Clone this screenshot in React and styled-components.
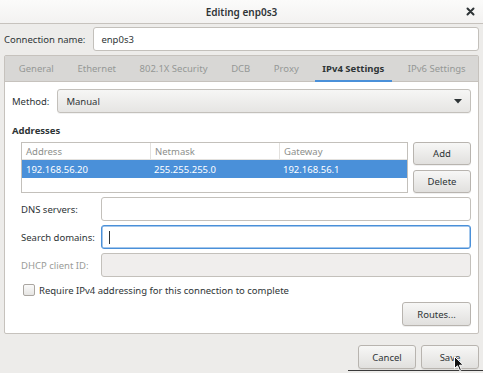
import React from "react"
import styled, { createGlobalStyle, css } from "styled-components"

const GlobalStyle = createGlobalStyle`
  html, body {
    margin: 0;
    padding: 0;
    background: #e8e7e6;
  }
  * {
    box-sizing: border-box;
  }
`

const Window = styled.div`
  position: relative;
  width: 483px;
  height: 373px;
  overflow: hidden;
  background: #edecea;
  font-family: "Noto Sans", "Open Sans", sans-serif;
  font-size: 9.5px;
  color: #2e3436;
`

const TitleBar = styled.header`
  position: relative;
  height: 24px;
  display: flex;
  align-items: center;
  justify-content: center;
  background: linear-gradient(#fbfbfa, #f3f2f1);
  border-bottom: 1px solid #c6c2bd;
`

const Title = styled.span`
  font-weight: 600;
  font-size: 10px;
  color: #2e3436;
`

const CloseButton = styled.span`
  position: absolute;
  right: 8px;
  top: 7px;
  display: flex;
`

const Body = styled.div`
  padding: 3px 4px 0;
`

const NameRow = styled.div`
  display: flex;
  align-items: center;
  gap: 8px;
`

const Label = styled.span`
  white-space: nowrap;
  color: ${props => (props.disabled ? "#9a9c98" : "#2e3436")};
`

const Entry = styled.div`
  flex: 1;
  height: 24px;
  display: flex;
  align-items: center;
  padding: 0 7px;
  border-radius: 3px;
  border: 1px solid ${props => (props.focused ? "#4a90d9" : "#c3c0bb")};
  background: ${props => (props.disabled ? "#f0eeed" : "#ffffff")};
  ${props => props.focused && css`box-shadow: inset 0 0 0 0.5px #4a90d9;`}
`

const Caret = styled.span`
  width: 1px;
  height: 13px;
  background: #2e3436;
`

const Notebook = styled.div`
  margin-top: 4px;
  border: 1px solid #c6c2bd;
  border-radius: 2px;
  background: #ffffff;
`

const Tabs = styled.div`
  height: 26px;
  display: flex;
  align-items: stretch;
  padding-left: 2px;
  background: #d8d7d5;
  border-bottom: 1px solid #c6c2bd;
`

const Tab = styled.div`
  position: relative;
  display: flex;
  align-items: center;
  white-space: nowrap;
  padding: 0 11.8px;
  color: ${props => (props.active ? "#2e3436" : "#959795")};
  font-weight: ${props => (props.active ? 700 : 400)};
  ${props => props.active && css`
    &::after {
      content: "";
      position: absolute;
      left: 4px;
      right: 4px;
      bottom: -1px;
      height: 2px;
      background: #4a90d9;
    }
  `}
`

const Page = styled.div`
  padding: 7px;
  display: flex;
  flex-direction: column;
`

const MethodRow = styled.div`
  display: flex;
  align-items: center;
  gap: 8px;
`

const Combo = styled.div`
  flex: 1;
  height: 24px;
  display: flex;
  align-items: center;
  justify-content: space-between;
  padding: 0 8px;
  border: 1px solid #c3c0bb;
  border-radius: 3px;
  background: linear-gradient(#f6f6f5, #e6e5e3);
  box-shadow: 0 1px 0 rgba(0, 0, 0, 0.05);
`

const SectionTitle = styled.div`
  margin-top: 10px;
  height: 16px;
  line-height: 16px;
  font-weight: 700;
`

const Indent = styled.div`
  padding-left: 9px;
  display: flex;
  flex-direction: column;
`

const AddressBlock = styled.div`
  margin-top: 3px;
  display: flex;
  gap: 5px;
`

const Table = styled.div`
  flex: 1;
  height: 51px;
  border: 1px solid #c3c0bb;
  background: #ffffff;
`

const TableRow = styled.div`
  display: grid;
  grid-template-columns: 128px 129px 1fr;
  height: ${props => (props.head ? 17 : 18)}px;
  background: ${props => (props.selected ? "#4a90d9" : "transparent")};
  color: ${props => (props.selected ? "#ffffff" : props.head ? "#8d8f8c" : "#2e3436")};
`

const Cell = styled.div`
  display: flex;
  align-items: center;
  padding-left: 4px;
  border-left: ${props => (props.divider ? "1px solid #e3e1de" : "none")};
  border-bottom: ${props => (props.head ? "1px solid #e3e1de" : "none")};
`

const SideButtons = styled.div`
  display: flex;
  flex-direction: column;
  gap: 5px;
`

const Button = styled.div`
  width: ${props => props.width || 58}px;
  height: ${props => props.height || 24}px;
  display: flex;
  align-items: center;
  justify-content: center;
  border: 1px solid #b8b4af;
  border-radius: 3px;
  background: linear-gradient(#f7f7f6, #e1e0de);
  box-shadow: 0 1px 0 rgba(0, 0, 0, 0.06);
  color: #2e3436;
`

const FormGrid = styled.div`
  margin-top: 4px;
  display: grid;
  grid-template-columns: 80px 1fr;
  row-gap: 4px;
  align-items: center;
`

const CheckRow = styled.div`
  margin-top: 5px;
  display: flex;
  align-items: center;
  gap: 4px;
  padding-left: 2px;
  height: 16px;
`

const CheckBox = styled.span`
  width: 12px;
  height: 12px;
  border: 1px solid #aaa6a1;
  border-radius: 2px;
  background: linear-gradient(#fafafa, #e6e5e3);
`

const RightAlign = styled.div`
  display: flex;
  justify-content: flex-end;
  margin-top: ${props => props.top || 0}px;
  gap: 5px;
`

const Cursor = styled.svg`
  position: absolute;
  left: 454px;
  top: 356px;
`

const TooltipEdge = styled.div`
  position: absolute;
  left: 348px;
  right: 0;
  top: 370px;
  height: 1px;
  background: #3a3a3a;
`

const CloseIcon = () => (
  <svg width="9" height="9" viewBox="0 0 9 9">
    <path d="M1.5 1.5 L7.5 7.5 M7.5 1.5 L1.5 7.5" stroke="#2e3436" strokeWidth="2" strokeLinecap="round" />
  </svg>
)

const tabs = ["General", "Ethernet", "802.1X Security", "DCB", "Proxy", "IPv4 Settings", "IPv6 Settings"]

const App = () => (
  <Window>
    <GlobalStyle />
    <TitleBar>
      <Title>Editing enp0s3</Title>
      <CloseButton><CloseIcon /></CloseButton>
    </TitleBar>
    <Body>
      <NameRow>
        <Label>Connection name:</Label>
        <Entry>enp0s3</Entry>
      </NameRow>
      <Notebook>
        <Tabs>
          {tabs.map(name => (
            <Tab key={name} active={name === "IPv4 Settings"}>{name}</Tab>
          ))}
        </Tabs>
        <Page>
          <MethodRow>
            <Label>Method:</Label>
            <Combo>
              <span>Manual</span>
              <svg width="8" height="5" viewBox="0 0 8 5">
                <path d="M0 0 L8 0 L4 4.5 Z" fill="#2e3436" />
              </svg>
            </Combo>
          </MethodRow>
          <SectionTitle>Addresses</SectionTitle>
          <Indent>
            <AddressBlock>
              <Table>
                <TableRow head>
                  <Cell head>Address</Cell>
                  <Cell head divider>Netmask</Cell>
                  <Cell head divider>Gateway</Cell>
                </TableRow>
                <TableRow selected>
                  <Cell>192.168.56.20</Cell>
                  <Cell>255.255.255.0</Cell>
                  <Cell>192.168.56.1</Cell>
                </TableRow>
              </Table>
              <SideButtons>
                <Button height={23}>Add</Button>
                <Button height={23}>Delete</Button>
              </SideButtons>
            </AddressBlock>
            <FormGrid>
              <Label>DNS servers:</Label>
              <Entry />
              <Label>Search domains:</Label>
              <Entry focused><Caret /></Entry>
              <Label disabled>DHCP client ID:</Label>
              <Entry disabled />
            </FormGrid>
            <CheckRow>
              <CheckBox />
              <Label>Require IPv4 addressing for this connection to complete</Label>
            </CheckRow>
          </Indent>
          <RightAlign top={4}>
            <Button width={69}>Routes...</Button>
          </RightAlign>
        </Page>
      </Notebook>
      <RightAlign top={11}>
        <Button>Cancel</Button>
        <Button>Save</Button>
      </RightAlign>
    </Body>
    <TooltipEdge />
    <Cursor width="11" height="16" viewBox="0 0 11 16">
      <path d="M0.5 0.5 L0.5 12.5 L3.5 9.8 L5.6 14.6 L7.4 13.8 L5.4 9.2 L9.4 9.2 Z" fill="#111" stroke="#fff" strokeWidth="1" />
    </Cursor>
  </Window>
)

export default App
